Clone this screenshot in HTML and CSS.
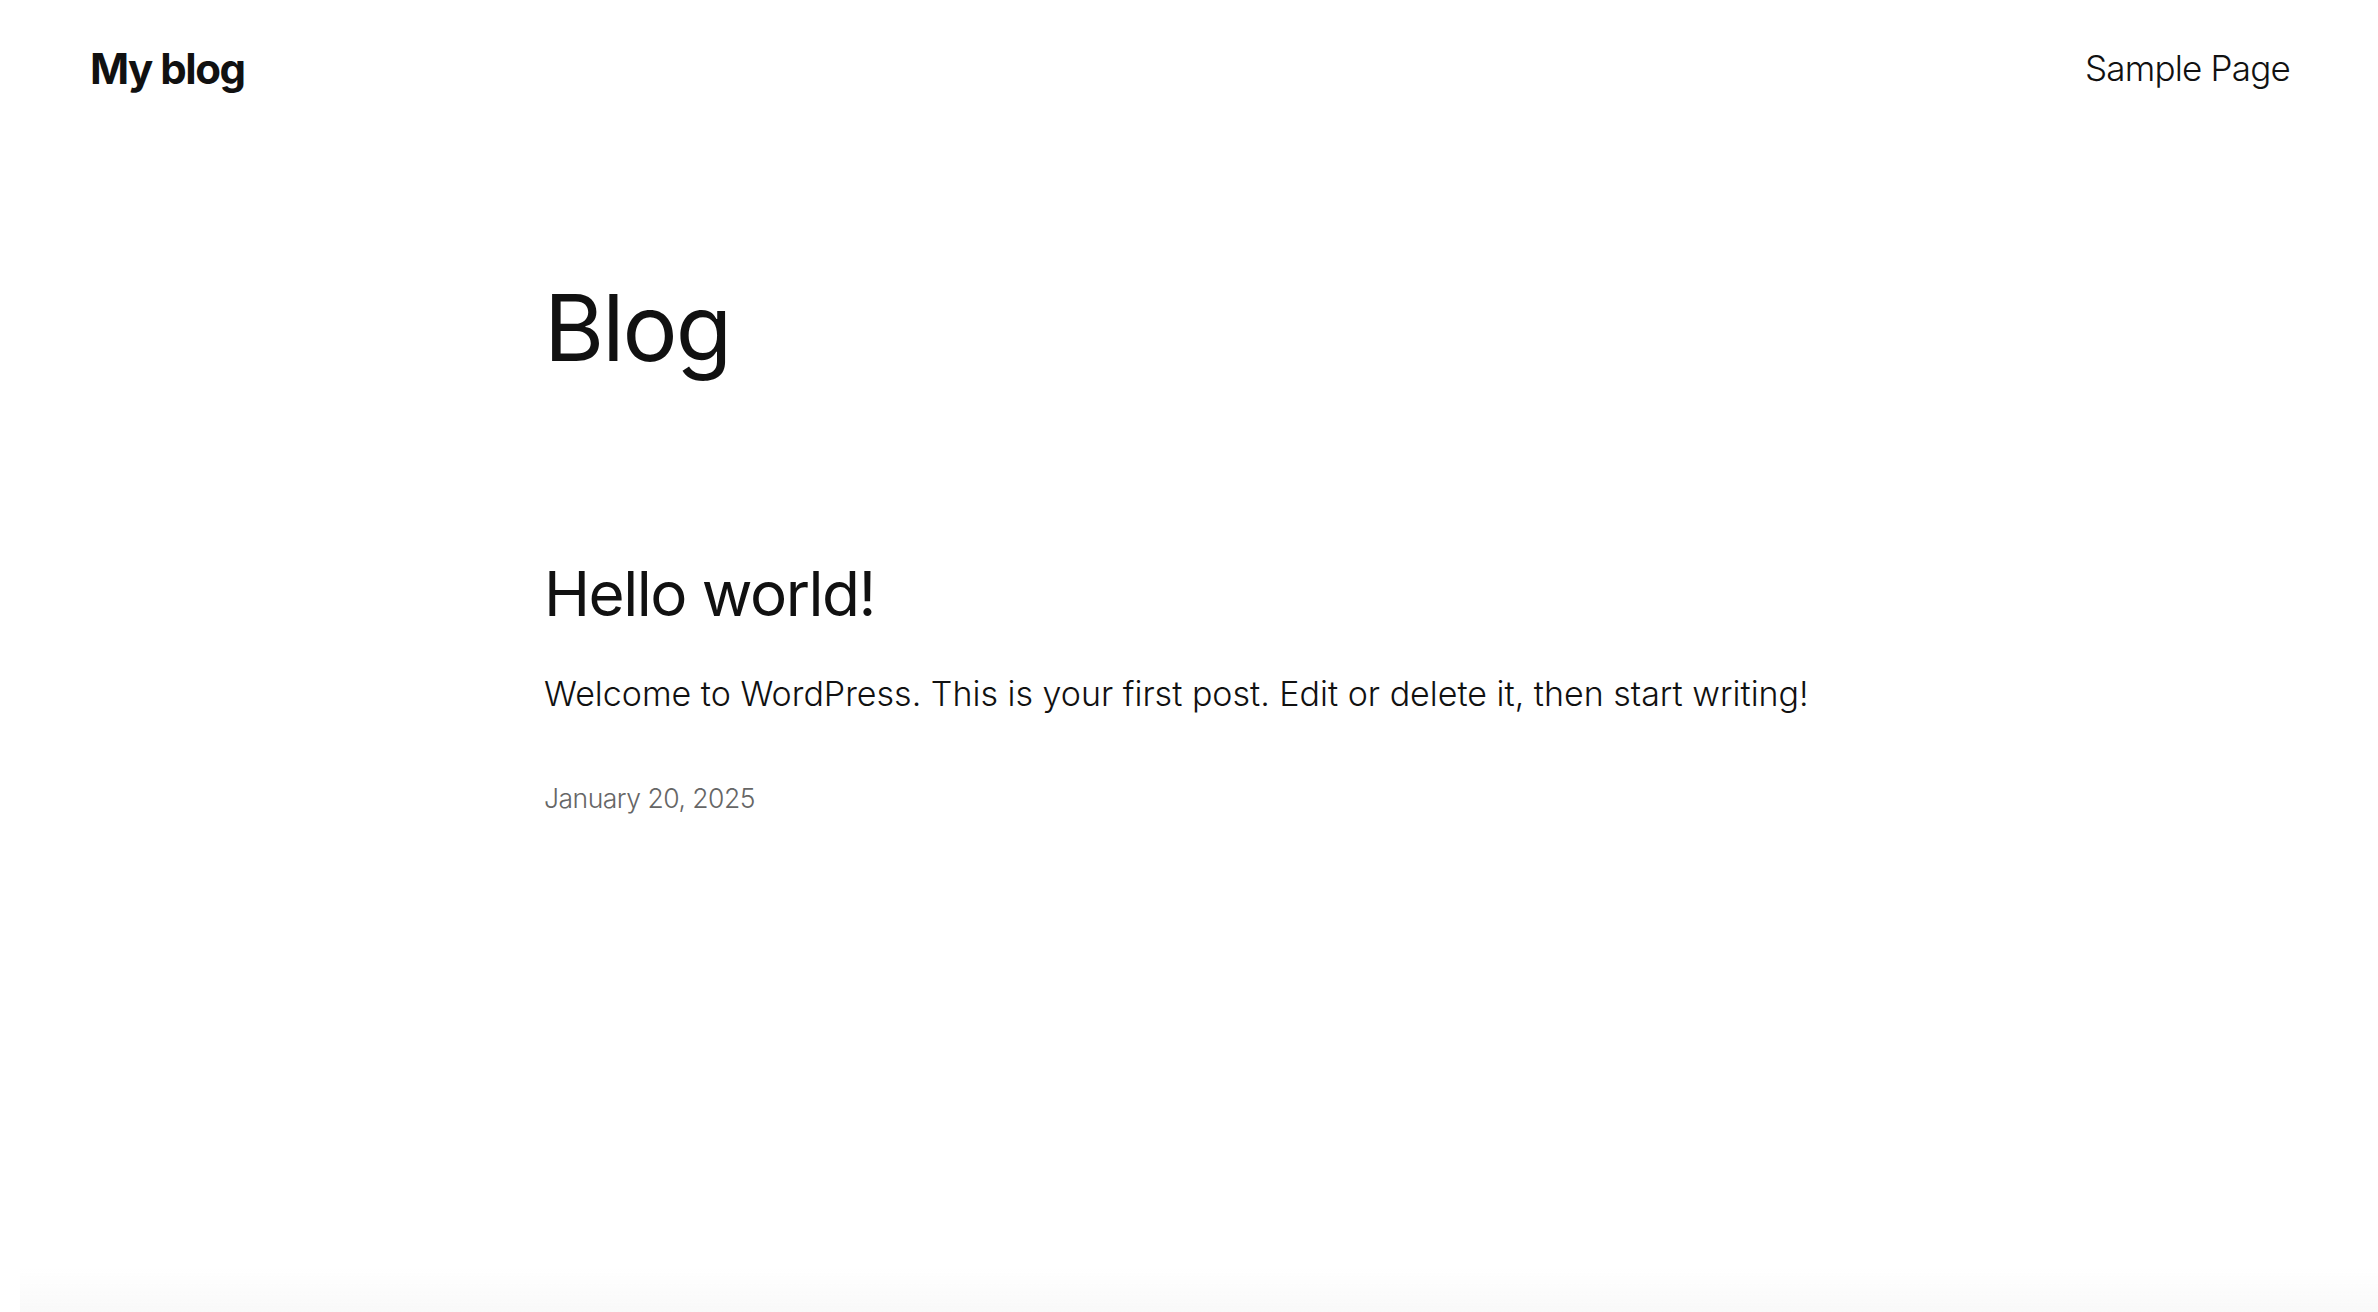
FILE: index.html
```html
<!DOCTYPE html>
<html lang="en">
<head>
    <meta charset="UTF-8">
    <meta name="viewport" content="width=device-width, initial-scale=1.0">
    <title>My blog</title>
    <link rel="stylesheet" href="styles.css">
</head>
<body>

    <header class="site-header">
        <a class="site-title" href="#">My blog</a>
        <nav class="site-nav">
            <a href="#">Sample Page</a>
        </nav>
    </header>

    <main class="content">
        <h1 class="page-title">Blog</h1>

        <article class="post">
            <h2 class="post-title"><a href="#">Hello world!</a></h2>
            <p class="post-excerpt">Welcome to WordPress. This is your first post. Edit or delete it, then start writing!</p>
            <div class="post-date">January 20, 2025</div>
        </article>
    </main>

    <div class="bottom-fade"></div>

</body>
</html>
```

FILE: styles.css
```css
html, body {
    height: 100%;
}

body {
    margin: 0;
    font-family: Inter, "Noto Sans", sans-serif;
    background-color: #fff;
    color: #111;
    overflow: hidden;
}

a {
    color: inherit;
    text-decoration: none;
}

.site-header {
    display: flex;
    justify-content: space-between;
    align-items: center;
    height: 136px;
    padding: 0 88px 0 90px;
    box-sizing: border-box;
}

.site-title {
    font-size: 42px;
    font-weight: 700;
    letter-spacing: -1.5px;
}

.site-nav a {
    font-size: 35px;
    font-weight: 300;
    letter-spacing: -0.8px;
}

.content {
    max-width: 1290px;
    margin: 0 auto;
    padding-top: 137px;
}

.page-title {
    margin: 0;
    font-size: 92px;
    font-weight: 400;
    letter-spacing: -2px;
    line-height: 1.2;
}

.post {
    margin-top: 174px;
}

.post-title {
    margin: 0;
    font-size: 62px;
    font-weight: 400;
    letter-spacing: -1.5px;
    line-height: 1.2;
}

.post-excerpt {
    margin: 36px 0 0;
    font-size: 34px;
    font-weight: 300;
    letter-spacing: 0;
    line-height: 1.5;
}

.post-date {
    margin-top: 63px;
    font-size: 26.5px;
    font-weight: 300;
    color: #666;
    letter-spacing: -0.5px;
}

.bottom-fade {
    position: fixed;
    left: 20px;
    right: 0;
    bottom: 0;
    height: 45px;
    background: linear-gradient(to bottom, rgba(240,240,240,0), rgba(240,240,240,0.4));
}
```
